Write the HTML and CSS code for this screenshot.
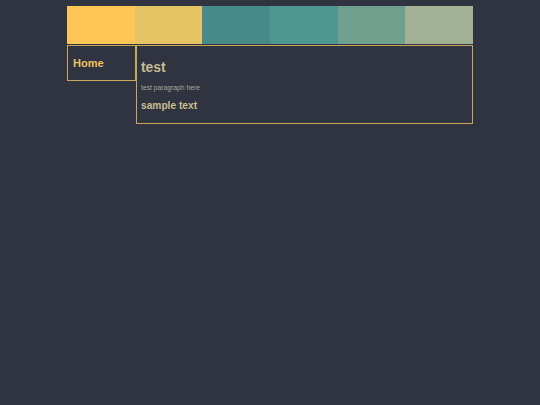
FILE: index.html
```html
<!DOCTYPE html>
<html>
<head>
<meta charset="utf-8">
<link rel="stylesheet" href="styles.css">
</head>
<body>
<div class="page">
  <div class="header">
    <div class="swatch c1"></div>
    <div class="swatch c2"></div>
    <div class="swatch c3"></div>
    <div class="swatch c4"></div>
    <div class="swatch c5"></div>
    <div class="swatch c6"></div>
  </div>
  <div class="body-row">
    <nav class="nav"><a class="nav-link">Home</a></nav>
    <main class="main">
      <h1 class="title">test</h1>
      <p class="para">test paragraph here</p>
      <h3 class="sub">sample text</h3>
    </main>
  </div>
</div>
</body>
</html>
```
FILE: styles.css
```css
html, body {
  margin: 0;
  padding: 0;
  background: #303440;
  font-family: "Liberation Sans", Arial, sans-serif;
}
.page {
  width: 406px;
  margin: 6px auto 0;
}
.header {
  display: flex;
  height: 38px;
  box-shadow: inset 0 0 0 1px rgba(60, 55, 40, 0.5);
}
.swatch {
  flex: 1;
}
.c1 { background: #fec657; }
.c2 { background: #e6c363; }
.c3 { background: #488a89; }
.c4 { background: #4d9692; }
.c5 { background: #6fa08e; }
.c6 { background: #a3b295; }
.body-row {
  display: flex;
  align-items: flex-start;
  margin-top: 1px;
}
.nav {
  width: 69px;
  border: 1px solid #c9a75a;
  padding: 11px 0 10px 5px;
  box-sizing: border-box;
  height: 36px;
}
.nav-link {
  display: block;
  color: #ebc25e;
  font-weight: bold;
  font-size: 11px;
}
.main {
  flex: 1;
  border: 1px solid #c9a75a;
  padding: 14px 5px 9px 4px;
  height: 79px;
  box-sizing: border-box;
}
.title {
  margin: 0;
  font-size: 13.8px;
  font-weight: bold;
  color: #c9bd92;
}
.para {
  margin: 9px 0 0;
  font-size: 6.75px;
  color: #a9a79d;
}
.sub {
  margin: 9px 0 0;
  font-size: 10.2px;
  font-weight: bold;
  color: #c9bd92;
}
```
